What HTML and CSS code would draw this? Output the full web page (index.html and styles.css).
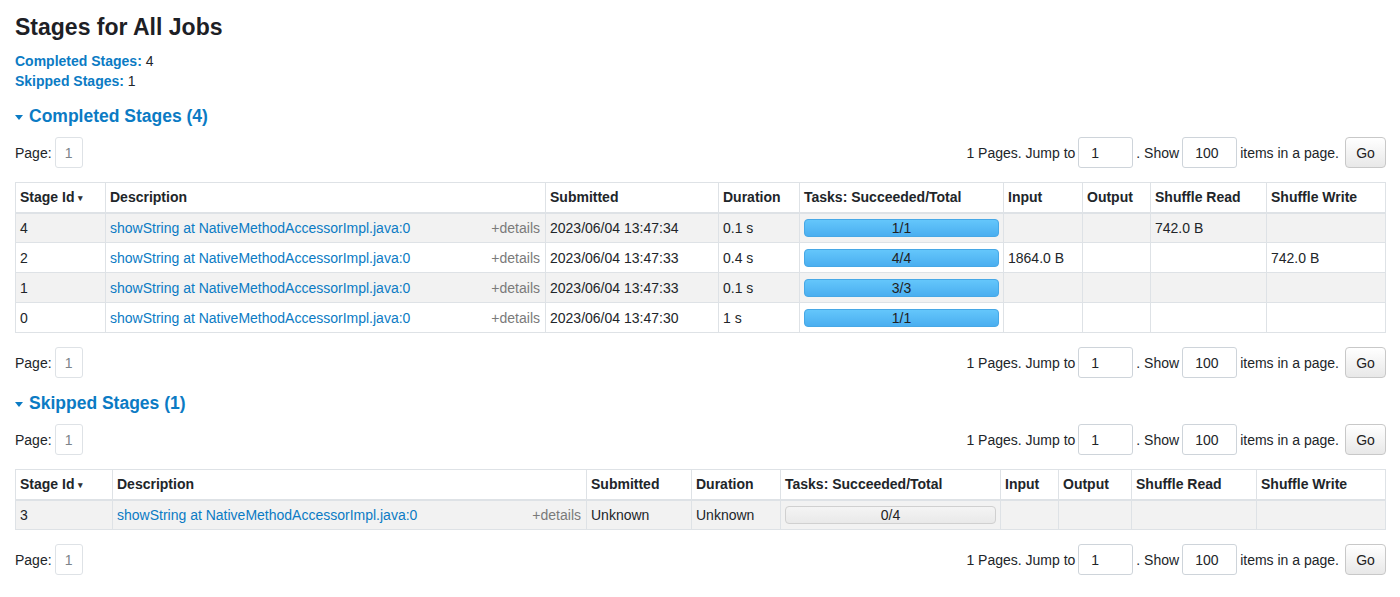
FILE: index.html
```html
<!DOCTYPE html>
<html>
<head>
<meta charset="utf-8">
<title>Stages for All Jobs</title>
<link rel="stylesheet" href="styles.css">
</head>
<body>
<div class="container">
  <h3 class="title">Stages for All Jobs</h3>
  <ul class="summary">
    <li><a class="sumlink" href="#completed">Completed Stages:</a> 4</li>
    <li><a class="sumlink" href="#skipped">Skipped Stages:</a> 1</li>
  </ul>

  <h4 class="section"><span class="caret"></span>Completed Stages (4)</h4>
  <div class="pager">
    <div class="pages"><span>Page:</span><span class="pagebox">1</span></div>
    <div class="jump">
      <span>1 Pages. Jump to</span><span class="inp w1">1</span><span>. Show</span><span class="inp w2">100</span><span>items in a page.</span><span class="go">Go</span>
    </div>
  </div>
  <table class="stages t1">
    <thead>
      <tr><th>Stage Id <span class="sort">▾</span></th><th>Description</th><th>Submitted</th><th>Duration</th><th>Tasks: Succeeded/Total</th><th>Input</th><th>Output</th><th>Shuffle Read</th><th>Shuffle Write</th></tr>
    </thead>
    <tbody>
      <tr class="odd"><td>4</td><td class="desc"><a href="#">showString at NativeMethodAccessorImpl.java:0</a><span class="details">+details</span></td><td>2023/06/04 13:47:34</td><td>0.1 s</td><td><div class="bar done">1/1</div></td><td></td><td></td><td>742.0 B</td><td></td></tr>
      <tr><td>2</td><td class="desc"><a href="#">showString at NativeMethodAccessorImpl.java:0</a><span class="details">+details</span></td><td>2023/06/04 13:47:33</td><td>0.4 s</td><td><div class="bar done">4/4</div></td><td>1864.0 B</td><td></td><td></td><td>742.0 B</td></tr>
      <tr class="odd"><td>1</td><td class="desc"><a href="#">showString at NativeMethodAccessorImpl.java:0</a><span class="details">+details</span></td><td>2023/06/04 13:47:33</td><td>0.1 s</td><td><div class="bar done">3/3</div></td><td></td><td></td><td></td><td></td></tr>
      <tr><td>0</td><td class="desc"><a href="#">showString at NativeMethodAccessorImpl.java:0</a><span class="details">+details</span></td><td>2023/06/04 13:47:30</td><td>1 s</td><td><div class="bar done">1/1</div></td><td></td><td></td><td></td><td></td></tr>
    </tbody>
  </table>
  <div class="pager after">
    <div class="pages"><span>Page:</span><span class="pagebox">1</span></div>
    <div class="jump">
      <span>1 Pages. Jump to</span><span class="inp w1">1</span><span>. Show</span><span class="inp w2">100</span><span>items in a page.</span><span class="go">Go</span>
    </div>
  </div>

  <h4 class="section"><span class="caret"></span>Skipped Stages (1)</h4>
  <div class="pager">
    <div class="pages"><span>Page:</span><span class="pagebox">1</span></div>
    <div class="jump">
      <span>1 Pages. Jump to</span><span class="inp w1">1</span><span>. Show</span><span class="inp w2">100</span><span>items in a page.</span><span class="go">Go</span>
    </div>
  </div>
  <table class="stages t2">
    <thead>
      <tr><th>Stage Id <span class="sort">▾</span></th><th>Description</th><th>Submitted</th><th>Duration</th><th>Tasks: Succeeded/Total</th><th>Input</th><th>Output</th><th>Shuffle Read</th><th>Shuffle Write</th></tr>
    </thead>
    <tbody>
      <tr class="odd"><td>3</td><td class="desc"><a href="#">showString at NativeMethodAccessorImpl.java:0</a><span class="details">+details</span></td><td>Unknown</td><td>Unknown</td><td><div class="bar empty">0/4</div></td><td></td><td></td><td></td><td></td></tr>
    </tbody>
  </table>
  <div class="pager after">
    <div class="pages"><span>Page:</span><span class="pagebox">1</span></div>
    <div class="jump">
      <span>1 Pages. Jump to</span><span class="inp w1">1</span><span>. Show</span><span class="inp w2">100</span><span>items in a page.</span><span class="go">Go</span>
    </div>
  </div>
</div>
</body>
</html>
```

FILE: styles.css
```css
html, body {
  margin: 0;
  padding: 0;
  background: #fff;
}
body {
  font-family: "Liberation Sans", Arial, sans-serif;
  font-size: 14px;
  color: #212529;
}
a {
  color: #0b7bc4;
  text-decoration: none;
}
.container {
  padding: 13px 14px 0 15px;
}
.title {
  margin: 0;
  font-size: 23px;
  line-height: 28px;
  font-weight: bold;
  color: #1d2025;
}
.summary {
  list-style: none;
  margin: 10px 0 0 0;
  padding: 0;
  line-height: 20px;
}
.sumlink {
  font-weight: bold;
}
.section {
  margin: 13px 0 0 0;
  font-size: 17.5px;
  line-height: 24px;
  font-weight: bold;
  color: #0b7bc4;
  display: flex;
  align-items: center;
}
.caret {
  width: 0;
  height: 0;
  border-left: 4px solid transparent;
  border-right: 4px solid transparent;
  border-top: 5px solid #0b7bc4;
  margin: 2px 6px 0 0;
}
.pager {
  margin-top: 9px;
  display: flex;
  justify-content: space-between;
  align-items: center;
  height: 31px;
}
.pager.after {
  margin-top: 14px;
}
.pages {
  display: flex;
  align-items: center;
  gap: 3px;
}
.pagebox {
  width: 26px;
  height: 29px;
  border: 1px solid #dee2e6;
  border-radius: 3px;
  color: #7b838a;
  display: flex;
  align-items: center;
  justify-content: center;
  font-size: 14px;
}
.jump {
  display: flex;
  align-items: center;
  gap: 3px;
}
.inp {
  height: 29px;
  border: 1px solid #ced4da;
  border-radius: 3px;
  display: flex;
  align-items: center;
  padding-left: 12px;
  box-sizing: content-box;
}
.inp.w1 { width: 41px; }
.inp.w2 { width: 41px; }
.go {
  margin-left: 3px;
  width: 39px;
  height: 29px;
  border: 1px solid #c8c8c8;
  border-radius: 4px;
  background: linear-gradient(to bottom, #ffffff, #e8e8e8);
  display: flex;
  align-items: center;
  justify-content: center;
  color: #222;
}
.stages {
  margin-top: 14px;
  width: 1370px;
  border-collapse: collapse;
  table-layout: fixed;
  border: 1px solid #dee2e6;
}
.stages th, .stages td {
  box-sizing: border-box;
  border: 1px solid #dee2e6;
  padding: 0 4px;
  height: 30px;
  text-align: left;
  white-space: nowrap;
  overflow: hidden;
}
.stages th {
  font-weight: bold;
  border-bottom: 2px solid #dee2e6;
}
.stages tr.odd td {
  background: #f2f2f2;
}
.sort {
  font-size: 9px;
  color: #333;
  vertical-align: 1px;
}
.stages td.desc {
  padding-right: 5px;
}
.desc a {
  float: left;
}
.details {
  float: right;
  color: #7a7a7a;
}
.bar {
  border-radius: 4px;
  text-align: center;
  color: #222;
  font-size: 14px;
  height: 16px;
  line-height: 16px;
}
.bar.done {
  background: linear-gradient(to bottom, #64c6fb, #4aaef0);
  border: 1px solid #47a8e6;
}
.bar.empty {
  background: linear-gradient(to bottom, #f4f4f4, #e9e9e9);
  border: 1px solid #d0d0d0;
}
.t1 th:nth-child(1) { width: 90px; }
.t1 th:nth-child(2) { width: 440px; }
.t1 th:nth-child(3) { width: 173px; }
.t1 th:nth-child(4) { width: 81px; }
.t1 th:nth-child(5) { width: 204px; }
.t1 th:nth-child(6) { width: 79px; }
.t1 th:nth-child(7) { width: 68px; }
.t1 th:nth-child(8) { width: 116px; }
.t1 th:nth-child(9) { width: 119px; }
.t2 th:nth-child(1) { width: 97px; }
.t2 th:nth-child(2) { width: 474px; }
.t2 th:nth-child(3) { width: 105px; }
.t2 th:nth-child(4) { width: 89px; }
.t2 th:nth-child(5) { width: 220px; }
.t2 th:nth-child(6) { width: 58px; }
.t2 th:nth-child(7) { width: 73px; }
.t2 th:nth-child(8) { width: 125px; }
.t2 th:nth-child(9) { width: 129px; }
```
